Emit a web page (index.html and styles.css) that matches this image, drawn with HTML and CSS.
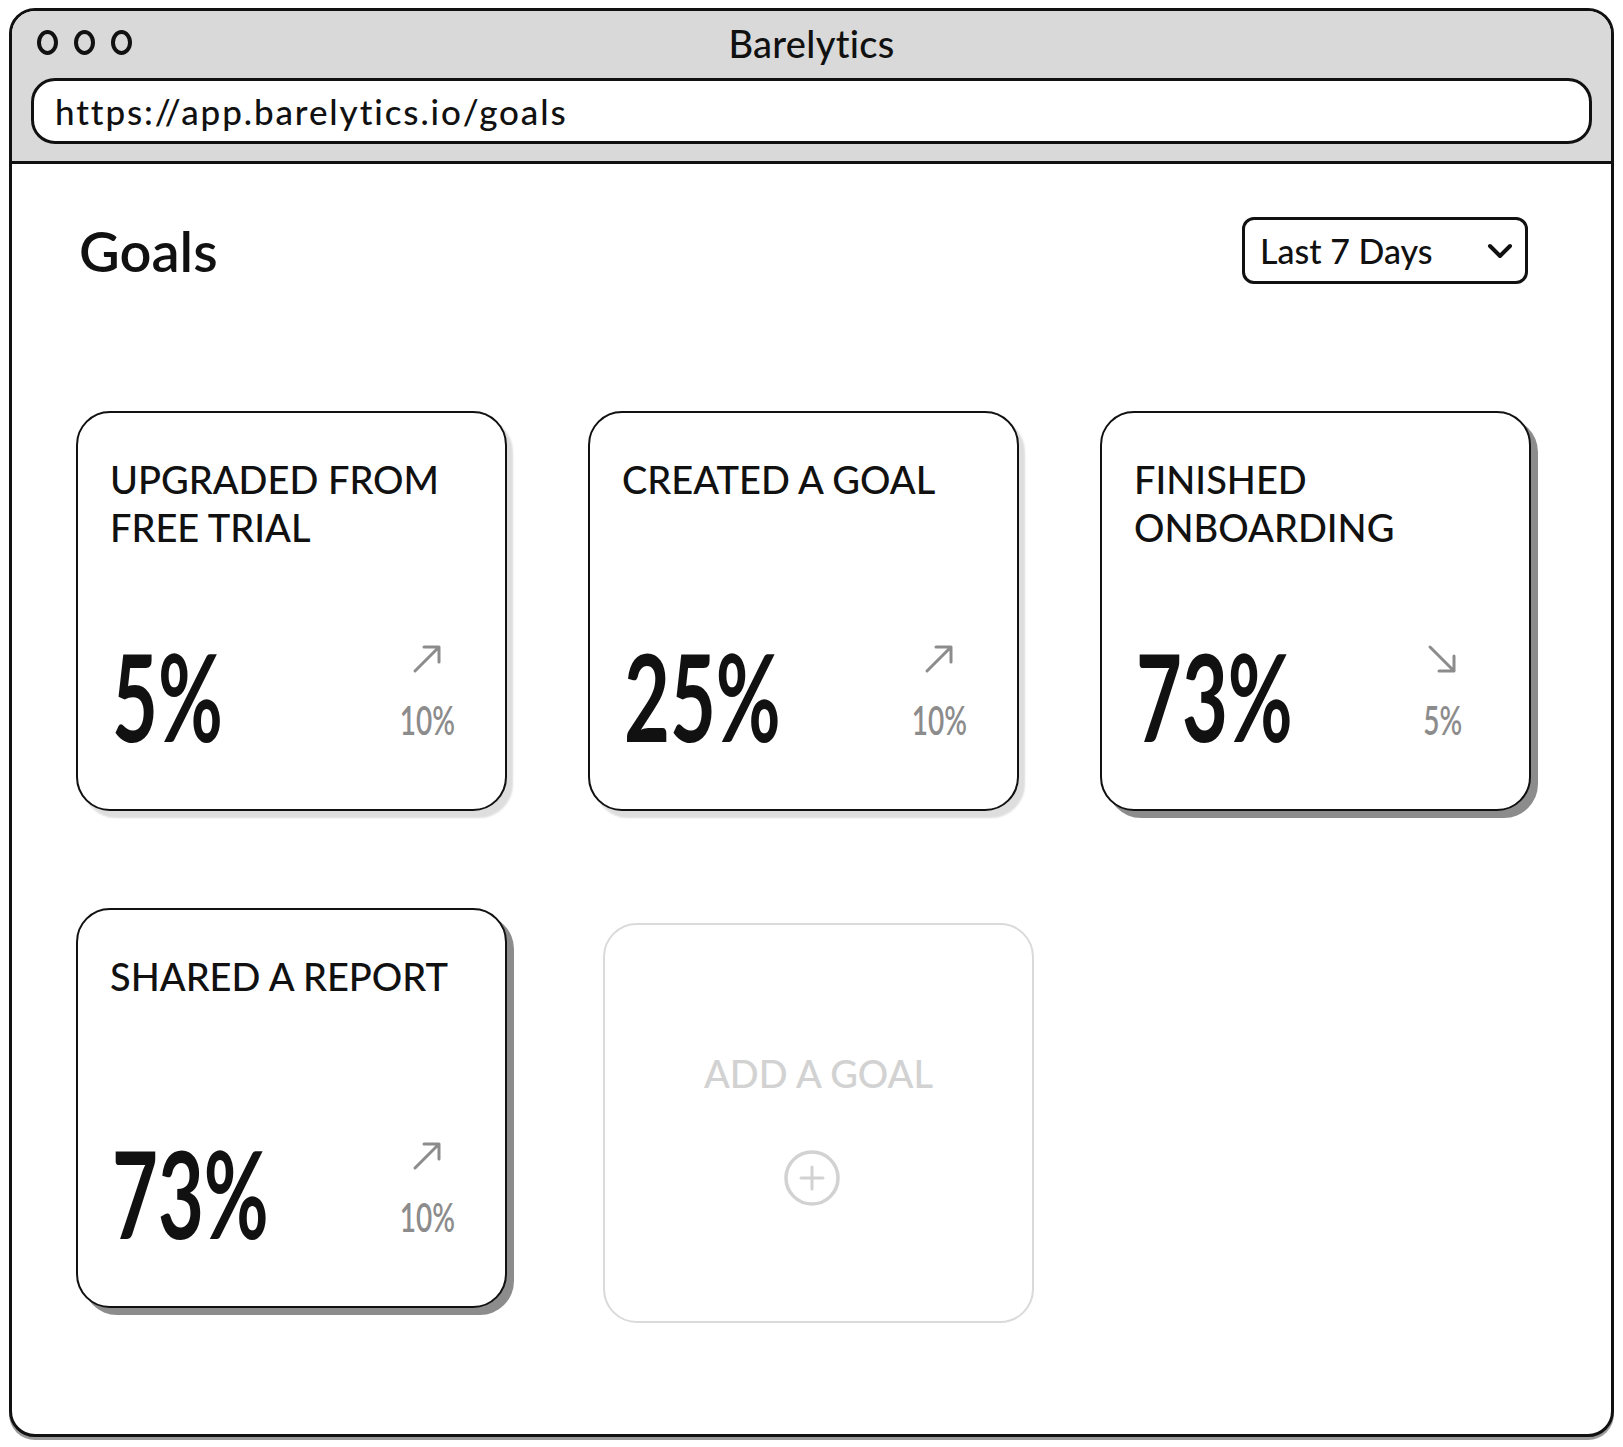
FILE: index.html
```html
<!DOCTYPE html>
<html lang="en">
<head>
<meta charset="UTF-8">
<title>Barelytics – Goals</title>
<meta name="viewport" content="width=device-width,initial-scale=1">
<link rel="stylesheet" href="styles.css">
</head>
<body>
<div class="window">

  <!-- browser chrome -->
  <div class="chrome">
    <div class="titlerow">
      <div class="dots"><span></span><span></span><span></span></div>
      <div class="wintitle">Barelytics</div>
      <div></div>
    </div>
    <div class="urlbar">https://app.barelytics.io/goals</div>
  </div>

  <div class="page">
    <div class="pagehead">
      <h1>Goals</h1>
      <div class="range">
        <span>Last 7 Days</span>
        <svg width="26" height="16" viewBox="0 0 26 16"><path d="M3 3 L13 13 L23 3" fill="none" stroke="#111" stroke-width="4" stroke-linecap="round" stroke-linejoin="round"/></svg>
      </div>
    </div>

    <!-- goal cards -->
    <div class="grid">
      <div class="card">
        <div class="ctitle">Upgraded from free trial</div>
        <div class="cfoot">
          <div class="big">5%</div>
          <div class="trend">
            <svg viewBox="0 0 32 32"><path d="M4 28 L28 4 M13 4 H28 V19" fill="none" stroke="currentColor" stroke-width="3" stroke-linecap="round" stroke-linejoin="round"/></svg>
            <span>10%</span>
          </div>
        </div>
      </div>

      <div class="card">
        <div class="ctitle">Created a goal</div>
        <div class="cfoot">
          <div class="big">25%</div>
          <div class="trend">
            <svg viewBox="0 0 32 32"><path d="M4 28 L28 4 M13 4 H28 V19" fill="none" stroke="currentColor" stroke-width="3" stroke-linecap="round" stroke-linejoin="round"/></svg>
            <span>10%</span>
          </div>
        </div>
      </div>

      <div class="card dark">
        <div class="ctitle">Finished onboarding</div>
        <div class="cfoot">
          <div class="big">73%</div>
          <div class="trend down">
            <svg viewBox="0 0 32 32"><path d="M4 4 L28 28 M28 13 V28 H13" fill="none" stroke="currentColor" stroke-width="3" stroke-linecap="round" stroke-linejoin="round"/></svg>
            <span>5%</span>
          </div>
        </div>
      </div>

      <div class="card dark">
        <div class="ctitle">Shared a report</div>
        <div class="cfoot">
          <div class="big">73%</div>
          <div class="trend">
            <svg viewBox="0 0 32 32"><path d="M4 28 L28 4 M13 4 H28 V19" fill="none" stroke="currentColor" stroke-width="3" stroke-linecap="round" stroke-linejoin="round"/></svg>
            <span>10%</span>
          </div>
        </div>
      </div>

      <div class="addcard">
        <div class="addlabel">Add a goal</div>
        <svg class="addicon" width="58" height="58" viewBox="0 0 58 58"><circle cx="29" cy="29" r="26" fill="none" stroke="currentColor" stroke-width="3.5"/><path d="M29 18 V40 M18 29 H40" stroke="currentColor" stroke-width="3" stroke-linecap="round"/></svg>
      </div>
    </div>
  </div>

</div>
</body>
</html>
```

FILE: styles.css
```css
body{margin:0;padding:8px 9px;background:#fff;color:#111;font-family:Lato,"Open Sans","DejaVu Sans",sans-serif}
.window{height:1429px;box-sizing:border-box;border:3.5px solid #111;border-radius:26px;overflow:hidden;background:#fff;box-shadow:0 3px 0 #9a9a9a}

/* browser chrome */
.chrome{background:#d9d9d9;border-bottom:3px solid #111;padding:0 19px 17px}
.titlerow{display:grid;grid-template-columns:1fr auto 1fr;align-items:center;height:63px;margin-bottom:4px}
.dots{display:flex;gap:16px;padding-left:6px}
.dots span{width:13px;height:17px;border:4px solid #111;border-radius:50%}
.wintitle{font-size:38px;font-weight:500;letter-spacing:.3px}
.urlbar{height:66px;box-sizing:border-box;border:3.5px solid #111;border-radius:24px;background:#fff;
        display:flex;align-items:center;padding:0 21px;font-size:35px;font-weight:500;letter-spacing:1.9px}

/* page */
.page{padding:53px 80px 0 64px}
.pagehead{display:flex;justify-content:space-between;align-items:center;height:67px}
h1{margin:0;padding-left:3px;font-size:56px;font-weight:600}
.range{display:flex;align-items:center;justify-content:space-between;width:286px;height:67px;margin-right:3px;
       box-sizing:border-box;border:3.5px solid #111;border-radius:12px;padding:0 12px 0 15px;font-size:34px;font-weight:500}

/* cards */
.grid{display:grid;grid-template-columns:repeat(3,431px);column-gap:81px;row-gap:97px;margin-top:127px}
.card{height:400px;box-sizing:border-box;border:2px solid #111;border-radius:34px;background:#fff;
      padding:42px 48px 55px 32px;display:flex;flex-direction:column;justify-content:space-between;
      box-shadow:6px 7px 2px #dedede}
.card.dark{box-shadow:7px 7px 0 #8c8c8c}
.ctitle{font-size:38px;line-height:48px;font-weight:500;text-transform:uppercase}
.cfoot{display:flex;justify-content:space-between;align-items:flex-end}
.big{font-size:120px;line-height:116px;font-weight:700;margin-left:2px;transform:scaleX(.66);transform-origin:left}
.trend{display:flex;flex-direction:column;align-items:center;width:60px;padding-bottom:14px;color:#8c8c8c}
.trend svg{width:32px;height:32px;margin-bottom:25px}
.trend span{font-size:40px;line-height:40px;font-weight:600;transform:scaleX(.7)}
.trend.down{margin-right:8px}
.trend.down svg{margin-left:-2px}

/* add a goal placeholder */
.addcard{height:400px;box-sizing:border-box;border:2px solid #dadada;border-radius:34px;margin:15px -15px -15px 15px;
         display:flex;flex-direction:column;align-items:center;justify-content:center;gap:52px;padding-top:10px;color:#d2d2d2}
.addlabel{font-size:38px;line-height:48px;font-weight:500;text-transform:uppercase}
.addicon{margin-right:14px}
```
